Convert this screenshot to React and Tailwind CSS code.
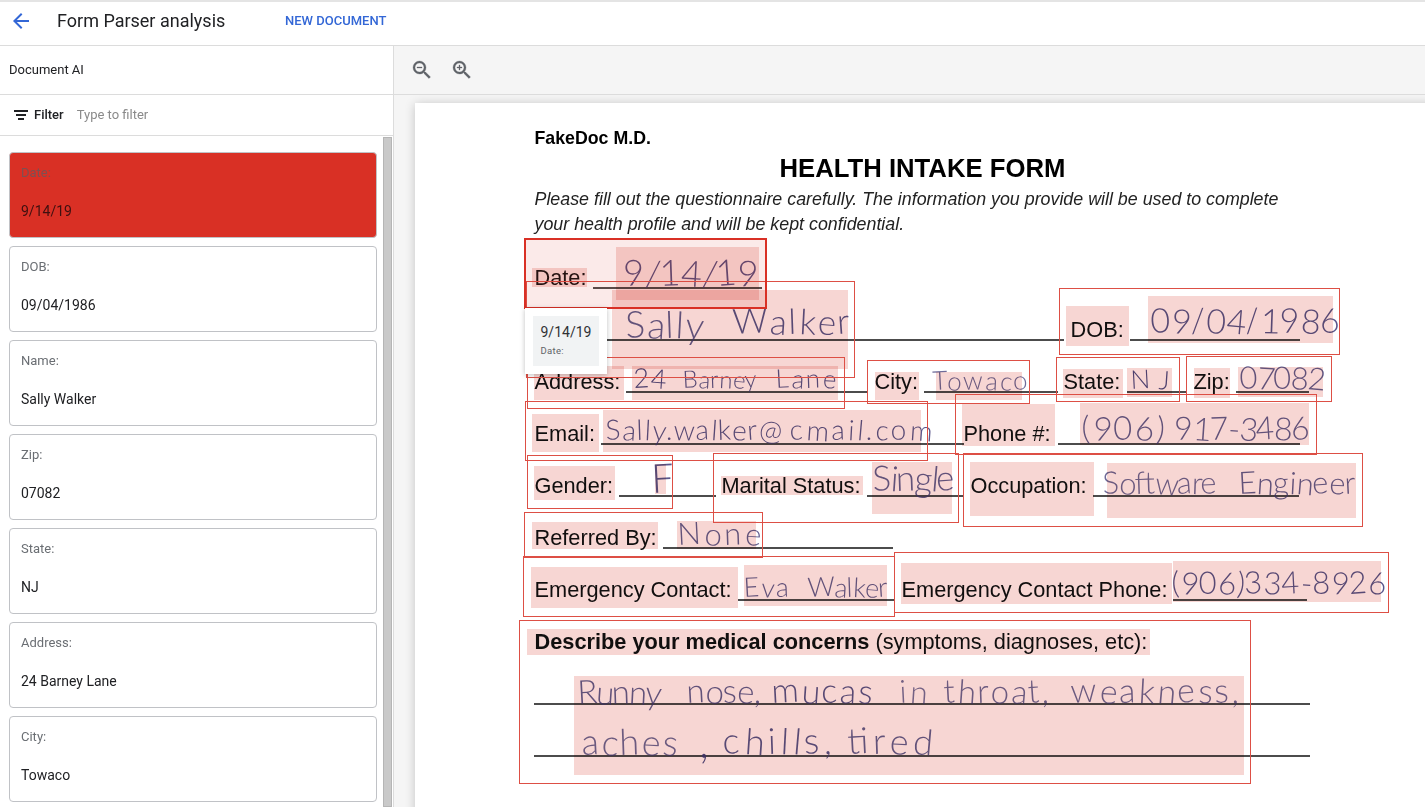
import React from "react";

const fields = [
  { label: "Date:", value: "9/14/19", active: true },
  { label: "DOB:", value: "09/04/1986" },
  { label: "Name:", value: "Sally Walker" },
  { label: "Zip:", value: "07082" },
  { label: "State:", value: "NJ" },
  { label: "Address:", value: "24 Barney Lane" },
  { label: "City:", value: "Towaco" },
];

// Entity outlines on the page canvas: [left, top, right, bottom]
const outlines = [
  [111, 178, 440, 275],
  [644, 185, 925, 252],
  [112, 254, 430, 306],
  [452, 257, 615, 301],
  [641, 254, 765, 299],
  [771, 253, 917, 299],
  [110, 298, 513, 358],
  [540, 291, 902, 352],
  [112, 352, 258, 406],
  [298, 350, 544, 420],
  [548, 350, 948, 424],
  [109, 409, 348, 455],
  [108, 453, 480, 514],
  [479, 449, 974, 510],
  [104, 517, 836, 681],
];

// Detected label and value areas: [left, top, right, bottom]
const highlights = [
  [117, 165, 172, 184], [201, 144, 344, 197],
  [197, 187, 433, 266],
  [651, 203, 714, 243], [733, 193, 918, 240],
  [119, 263, 209, 297], [217, 263, 423, 297],
  [460, 269, 504, 297], [521, 269, 607, 297],
  [648, 266, 708, 295], [712, 265, 757, 294],
  [779, 265, 815, 295], [823, 264, 908, 294],
  [117, 311, 184, 349], [188, 307, 506, 349],
  [547, 301, 640, 343], [665, 300, 894, 342],
  [119, 363, 200, 397], [240, 361, 251, 391],
  [306, 373, 448, 392], [457, 359, 537, 411],
  [555, 359, 679, 413], [692, 360, 941, 415],
  [117, 419, 243, 446], [262, 418, 341, 446],
  [116, 464, 323, 505], [329, 462, 472, 503],
  [486, 460, 757, 501], [758, 458, 966, 499],
  [112, 526, 735, 552], [159, 573, 829, 672],
];

// Handwritten answers: [text, x, baseline, width, size, opacity]
const ink = [
  ["9/14/19", 209, 183, 134, 36, 0.85],
  ["Sally", 211, 235, 77, 37, 0.8],
  ["Walker", 318, 231, 117, 35, 0.85],
  ["09/04/1986", 736, 230, 189, 34, 0.85],
  ["24", 219, 285, 32, 27, 0.9],
  ["Barney", 268, 285, 74, 24, 0.85],
  ["Lane", 361, 285, 60, 26, 0.85],
  ["Towaco", 518, 287, 95, 26, 0.75],
  ["NJ", 716, 286, 38, 26, 0.9],
  ["07082", 825, 286, 85, 31, 0.8],
  ["Sally.walker@", 191, 337, 176, 28, 0.85],
  ["cmail.com", 375, 337, 142, 28, 0.85],
  ["(906)", 667, 337, 82, 33, 0.8],
  ["917-3486", 760, 337, 135, 32, 0.8],
  ["F", 237, 390, 22, 40, 0.85],
  ["Single", 458, 388, 82, 35, 0.8],
  ["Software", 688, 391, 114, 31, 0.75],
  ["Engineer", 824, 391, 117, 31, 0.8],
  ["None", 263, 442, 83, 31, 0.8],
  ["Eva", 329, 494, 45, 27, 0.8],
  ["Walker", 393, 494, 80, 27, 0.8],
  ["(906)334-8926", 757, 491, 214, 31, 0.85],
  ["Runny", 163, 601, 83, 33, 0.8],
  ["nose,", 272, 600, 74, 33, 0.8],
  ["mucas", 357, 600, 100, 34, 0.85],
  ["in", 485, 600, 27, 32, 0.7],
  ["throat,", 529, 600, 105, 33, 0.75],
  ["weakness,", 656, 600, 168, 34, 0.75],
  ["aches", 167, 652, 95, 36, 0.75],
  [",", 284, 655, 8, 46, 0.9],
  ["chills,", 308, 651, 109, 36, 0.85],
  ["tired", 433, 651, 84, 36, 0.8],
];

// Small per-letter tilt of the pen
const tilt = "-3 4 -2 3 5 -4 2 -3 4 -2 3 -4 2";

const box = ([l, t, r, b]) => ({ left: l, top: t, width: r - l, height: b - t });

function Row({ children }) {
  return <div className="flex h-[52px] leading-[51px]">{children}</div>;
}

function Label({ w, children }) {
  return (
    <div className={`${w} shrink-0 indent-[0.5px] text-[21.75px] whitespace-nowrap text-[#111]`}>{children}</div>
  );
}

function Blank({ w }) {
  return <div className={`${w} mt-[35px] h-[2px] shrink-0 bg-[#4c4c4c]`} />;
}

function FieldCard({ label, value, active }) {
  return (
    <div
      className={`flex h-[86px] shrink-0 flex-col rounded border border-[#c0c2c6] px-[11px] pt-[10px] leading-5 ${
        active ? "bg-[#d93025]" : "bg-white"
      }`}
    >
      <div className={`text-[13px] ${active ? "text-[#7d5052]" : "text-[#6a6e73]"}`}>{label}</div>
      <div className={`mt-[18px] text-[14px] ${active ? "text-[#3e1010]" : "text-[#202124]"}`}>{value}</div>
    </div>
  );
}

function Page() {
  return (
    <div className="relative h-[900px] w-[1100px] shrink-0 bg-white pl-[119px] font-['Liberation_Sans',sans-serif] text-black shadow-[0_1px_10px_rgba(0,0,0,0.2)]">
      <div className="h-[149px] pt-[24px] pl-[0.5px]">
        <div className="text-[17.75px] leading-[22px] font-bold">FakeDoc M.D.</div>
        <div className="ml-[245px] h-[38px] text-[25.7px] leading-[38px] font-bold">HEALTH INTAKE FORM</div>
        <div className="text-[17.83px] leading-[25px] whitespace-nowrap italic text-[#222]">
          Please fill out the questionnaire carefully. The information you provide will be used to complete
          <br />
          your health profile and will be kept confidential.
        </div>
      </div>
      <Row>
        <Label w="w-[59px]">Date:</Label>
        <Blank w="w-[169px]" />
      </Row>
      <Row>
        <Label w="w-[72px]" />
        <Blank w="w-[458px]" />
        <Label w="w-[60px] ml-[6px]">DOB:</Label>
        <Blank w="w-[170px]" />
      </Row>
      <Row>
        <Label w="w-[92px]">Address:</Label>
        <Blank w="w-[242px]" />
        <Label w="w-[50px] ml-[6px]">City:</Label>
        <Blank w="w-[134px]" />
        <Label w="w-[64px] ml-[5px]">State:</Label>
        <Blank w="w-[60px]" />
        <Label w="w-[43px] ml-[6px]">Zip:</Label>
        <Blank w="w-[73px]" />
      </Row>
      <Row>
        <Label w="w-[67px]">Email:</Label>
        <Blank w="w-[363px]" />
        <Label w="w-[95px] -ml-[1px]">Phone #:</Label>
        <Blank w="w-[242px]" />
      </Row>
      <Row>
        <Label w="w-[85px]">Gender:</Label>
        <Blank w="w-[97px]" />
        <Label w="w-[146px] ml-[5px]">Marital Status:</Label>
        <Blank w="w-[97px]" />
        <Label w="w-[123px] ml-[6px]">Occupation:</Label>
        <Blank w="w-[206px]" />
      </Row>
      <Row>
        <Label w="w-[129px]">Referred By:</Label>
        <Blank w="w-[230px]" />
      </Row>
      <Row>
        <Label w="w-[204px]">Emergency Contact:</Label>
        <Blank w="w-[157px]" />
        <Label w="w-[272px] ml-[6px]">Emergency Contact Phone:</Label>
        <Blank w="w-[134px]" />
      </Row>
      <Row>
        <Label w="w-[640px]">
          <b>Describe your medical concerns</b> (symptoms, diagnoses, etc):
        </Label>
      </Row>
      <Row>
        <Blank w="w-[776px]" />
      </Row>
      <Row>
        <Blank w="w-[776px]" />
      </Row>

      <svg
        className="absolute top-0 left-0 font-['Lato','Liberation_Sans',sans-serif] font-light"
        width="1010"
        height="704"
        fill="#3f3a78"
      >
        {ink.map(([text, x, y, w, size, opacity], i) => (
          <text key={i} x={x} y={y} fontSize={size} textLength={w} lengthAdjust="spacing" rotate={tilt} opacity={opacity}>
            {text}
          </text>
        ))}
      </svg>

      {highlights.map((r, i) => (
        <div key={i} className="absolute bg-[#d93025]/20 mix-blend-multiply" style={box(r)} />
      ))}
      {outlines.map((r, i) => (
        <div key={i} className="absolute border border-[#dd4f45]" style={box(r)} />
      ))}
      <div className="absolute top-[135px] left-[109px] h-[71px] w-[243px] border-2 border-[#d93025] bg-[#d93025]/10" />

      <div className="absolute top-[205px] left-[110px] h-[66px] w-[82px] bg-white p-2 font-['Roboto',sans-serif] shadow-[0_1px_5px_rgba(0,0,0,0.25)]">
        <div className="h-[50px] bg-[#f1f3f4] pt-[6px] pl-[7.5px]">
          <div className="text-[14px] leading-5 text-[#303134]">9/14/19</div>
          <div className="text-[9.5px] leading-[18px] tracking-[0.3px] text-[#5f6368]">Date:</div>
        </div>
      </div>
    </div>
  );
}

export default function App() {
  return (
    <div className="flex h-[807px] w-[1425px] flex-col overflow-hidden bg-white font-['Roboto',sans-serif] text-[#202124]">
      <header className="flex h-[46px] shrink-0 items-center border-t-2 border-b border-t-[#e4e4e4] border-b-[#dcdcdc] pb-[6px]">
        <svg className="ml-[9px] shrink-0" width="24" height="24" viewBox="0 0 24 24" fill="#3367d6">
          <path d="M20 11H7.83l5.59-5.59L12 4l-8 8 8 8 1.41-1.41L7.83 13H20v-2z" />
        </svg>
        <h1 className="ml-6 w-[228px] text-[18px] leading-6">Form Parser analysis</h1>
        <button className="text-[13px] font-medium text-[#3367d6]">NEW DOCUMENT</button>
      </header>
      <div className="flex min-h-0 flex-1">
        <aside className="flex w-[394px] shrink-0 flex-col border-r border-[#dcdcdc]">
          <div className="flex h-[49px] shrink-0 items-center border-b border-[#dcdcdc] pl-[9px] text-[13px]">
            Document AI
          </div>
          <div className="flex h-[41px] shrink-0 items-center border-b border-[#dcdcdc] pl-[12px] text-[13px]">
            <svg width="18" height="18" viewBox="0 0 18 18" fill="#202124">
              <path d="M2 4h14v2H2zM4 8h10v2H4zM6 12h6v2H6z" />
            </svg>
            <span className="ml-1 font-medium">Filter</span>
            <span className="ml-[13px] text-[#8a8a8a]">Type to filter</span>
          </div>
          <div className="flex min-h-0 flex-1 overflow-hidden">
            <div className="flex w-[377px] flex-col gap-2 pt-4 pl-[9px]">
              {fields.map((f) => (
                <FieldCard key={f.label} {...f} />
              ))}
            </div>
            <div className="mt-[1px] ml-[6px] w-[9px] border border-[#b5b5b5] bg-[#c9c9c9]" />
          </div>
        </aside>
        <main className="flex min-w-0 flex-1 flex-col bg-[#f5f5f5]">
          <div className="flex h-[49px] shrink-0 items-center gap-4 border-b border-[#dcdcdc] pl-[16px]">
            <svg width="24" height="24" viewBox="0 0 24 24" fill="#5f6368" stroke="#5f6368" strokeWidth="0.3">
              <path d="M15.5 14h-.79l-.28-.27A6.471 6.471 0 0 0 16 9.5 6.5 6.5 0 1 0 9.5 16c1.61 0 3.09-.59 4.23-1.57l.27.28v.79l5 4.99L20.49 19l-4.99-5zm-6 0C7.01 14 5 11.99 5 9.5S7.01 5 9.5 5 14 7.01 14 9.5 11.99 14 9.5 14zM7 9h5v1H7z" />
            </svg>
            <svg width="24" height="24" viewBox="0 0 24 24" fill="#5f6368" stroke="#5f6368" strokeWidth="0.3">
              <path d="M15.5 14h-.79l-.28-.27A6.471 6.471 0 0 0 16 9.5 6.5 6.5 0 1 0 9.5 16c1.61 0 3.09-.59 4.23-1.57l.27.28v.79l5 4.99L20.49 19l-4.99-5zm-6 0C7.01 14 5 11.99 5 9.5S7.01 5 9.5 5 14 7.01 14 9.5 11.99 14 9.5 14zM12 10h-2v2H9v-2H7V9h2V7h1v2h2v1z" />
            </svg>
          </div>
          <div className="flex min-h-0 flex-1 overflow-hidden pt-2 pl-[21px]">
            <Page />
          </div>
        </main>
      </div>
    </div>
  );
}
